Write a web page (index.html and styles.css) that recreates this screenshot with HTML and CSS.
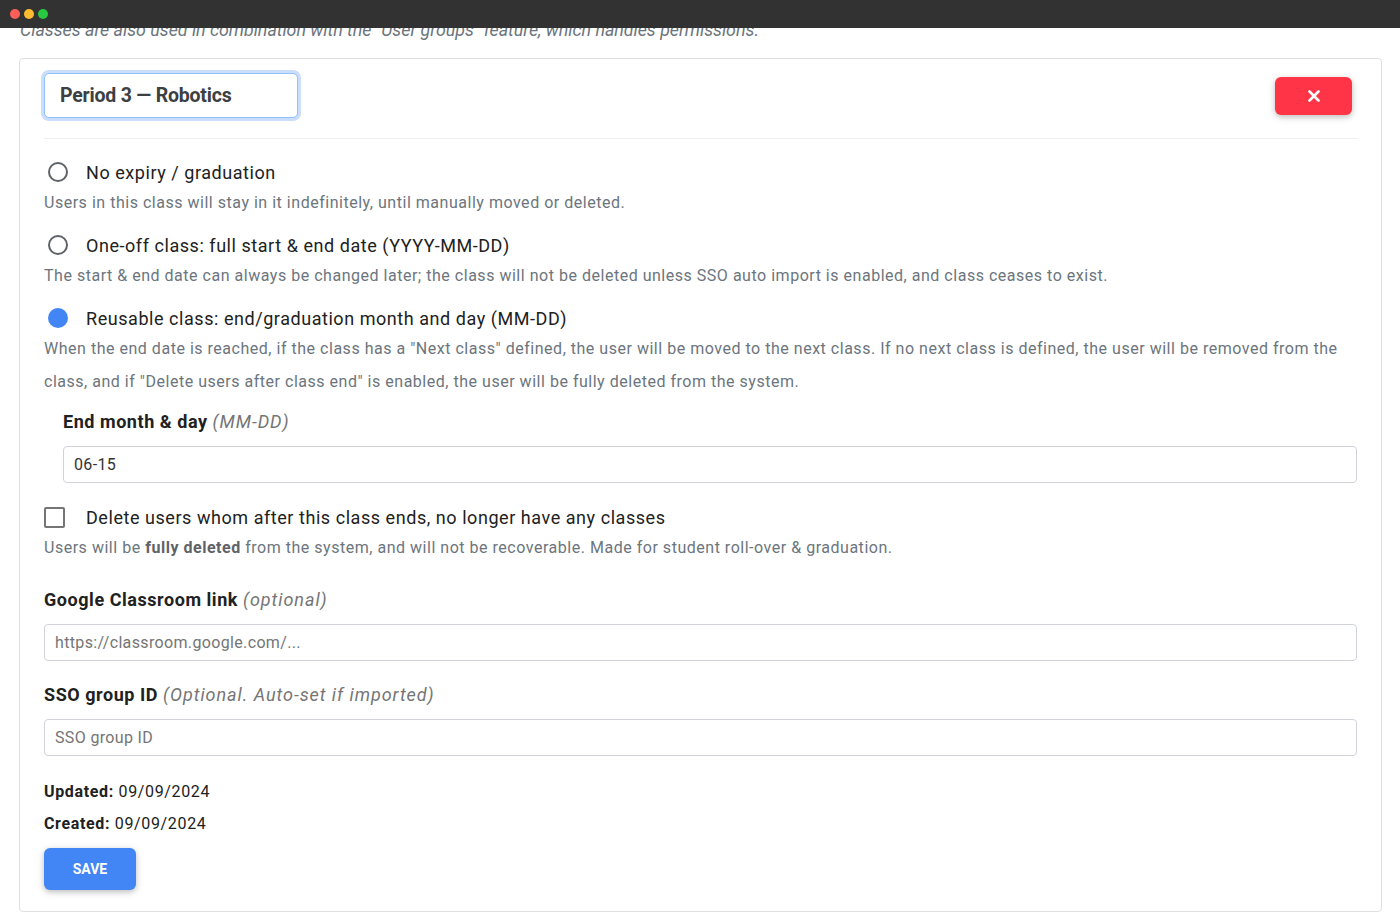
FILE: index.html
```html
<!DOCTYPE html>
<html lang="en">
<head>
<meta charset="utf-8">
<title>Class editor</title>
<link rel="stylesheet" href="styles.css">
</head>
<body>
<div class="topbar">
  <span class="dot dot-red"></span>
  <span class="dot dot-yellow"></span>
  <span class="dot dot-green"></span>
</div>
<div class="viewport">
  <div class="page">
    <p class="intro">Classes are also used in combination with the "User groups" feature, which handles permissions.</p>
    <div class="card">
      <div class="card-header">
        <input class="title-input" type="text" value="Period 3 — Robotics">
        <button class="close-btn" type="button" aria-label="Close">
          <svg width="12" height="12" viewBox="0 0 12 12"><path d="M1.5 1.5 L10.5 10.5 M10.5 1.5 L1.5 10.5" stroke="#fff" stroke-width="2.6" stroke-linecap="round"/></svg>
        </button>
      </div>

      <div class="options">
        <div class="option">
          <div class="option-row"><span class="radio"></span><span>No expiry / graduation</span></div>
          <p class="desc">Users in this class will stay in it indefinitely, until manually moved or deleted.</p>
        </div>
        <div class="option">
          <div class="option-row"><span class="radio"></span><span>One-off class: full start &amp; end date (YYYY-MM-DD)</span></div>
          <p class="desc">The start &amp; end date can always be changed later; the class will not be deleted unless SSO auto import is enabled, and class ceases to exist.</p>
        </div>
        <div class="option">
          <div class="option-row"><span class="radio radio-checked"></span><span>Reusable class: end/graduation month and day (MM-DD)</span></div>
          <p class="desc">When the end date is reached, if the class has a "Next class" defined, the user will be moved to the next class. If no next class is defined, the user will be removed from the class, and if "Delete users after class end" is enabled, the user will be fully deleted from the system.</p>
        </div>
      </div>

      <div class="subfield">
        <div class="field-label">End month &amp; day <em>(MM-DD)</em></div>
        <input class="text-input" type="text" value="06-15">
      </div>

      <div class="check-block">
        <div class="option-row"><span class="checkbox"></span><span>Delete users whom after this class ends, no longer have any classes</span></div>
        <p class="desc">Users will be <strong>fully deleted</strong> from the system, and will not be recoverable. Made for student roll-over &amp; graduation.</p>
      </div>

      <div class="field field-google">
        <div class="field-label">Google Classroom link <em>(optional)</em></div>
        <input class="text-input" type="text" placeholder="https://classroom.google.com/...">
      </div>

      <div class="field field-sso">
        <div class="field-label">SSO group ID <em>(Optional. Auto-set if imported)</em></div>
        <input class="text-input" type="text" placeholder="SSO group ID">
      </div>

      <div class="meta">
        <div><strong>Updated:</strong> 09/09/2024</div>
        <div><strong>Created:</strong> 09/09/2024</div>
      </div>

      <button class="save-btn" type="button">Save</button>
    </div>
  </div>
</div>
</body>
</html>
```

FILE: styles.css
```css
* { box-sizing: border-box; }

html, body {
  margin: 0;
  padding: 0;
  background: #fff;
  font-family: Roboto, "Liberation Sans", Arial, sans-serif;
  color: #212121;
}

.topbar {
  height: 28px;
  background: #323232;
  display: flex;
  align-items: center;
  padding-left: 10px;
  gap: 4px;
  position: relative;
  z-index: 2;
}

.dot {
  width: 10px;
  height: 10px;
  border-radius: 50%;
  display: inline-block;
}
.dot-red { background: #ff5f57; }
.dot-yellow { background: #febc2e; }
.dot-green { background: #28c840; }

.viewport {
  height: 885px;
  overflow: hidden;
}

.page {
  margin-top: -9px;
  padding: 0 18px 0 19px;
}

.intro {
  margin: 0 0 18px 1px;
  font-size: 17.8px;
  line-height: 21px;
  font-style: italic;
  color: #6c757d;
}

.card {
  border: 1px solid #e0e0e0;
  border-radius: 4px;
  padding: 14px 24px 21px 24px;
  letter-spacing: 0.5px;
}

.card-header {
  display: flex;
  justify-content: space-between;
  align-items: center;
  padding-bottom: 20px;
  border-bottom: 1px solid #eeeeee;
  margin-bottom: 19px;
}

.title-input {
  width: 254px;
  height: 45px;
  border: 1px solid #90c2fb;
  border-radius: 5px;
  box-shadow: 0 0 0 3px rgba(66, 133, 244, 0.28);
  padding: 0 0 0 15px;
  font-family: inherit;
  font-size: 19.5px;
  font-weight: 700;
  letter-spacing: -0.2px;
  color: #3c4043;
  outline: none;
}

.close-btn {
  width: 77px;
  height: 38px;
  margin-right: 5px;
  border: none;
  border-radius: 6px;
  background: #ff3547;
  display: flex;
  align-items: center;
  justify-content: center;
  box-shadow: 0 2px 5px 0 rgba(0,0,0,0.16), 0 2px 10px 0 rgba(0,0,0,0.12);
  padding: 0;
}

.options {
  display: flex;
  flex-direction: column;
  gap: 12px;
}

.option-row {
  display: flex;
  align-items: center;
  height: 28px;
  font-size: 18px;
  color: #212121;
  letter-spacing: 0.55px;
}

.radio {
  width: 20px;
  height: 20px;
  border-radius: 50%;
  border: 2px solid #5f6368;
  margin-left: 4px;
  margin-right: 18px;
  flex: none;
}
.radio-checked {
  border: none;
  background: #4285f4;
}

.checkbox {
  width: 21px;
  height: 21px;
  border: 2px solid #757575;
  border-radius: 2px;
  margin-right: 21px;
  flex: none;
}

.desc {
  margin: 0;
  font-size: 16px;
  line-height: 33px;
  color: #6c757d;
  letter-spacing: 0.52px;
}
.desc strong {
  font-weight: 700;
  color: #5f6368;
}

.subfield {
  margin: 10px 0 0 19px;
}

.field-label {
  font-size: 18px;
  line-height: 28px;
  font-weight: 700;
  color: #212121;
  margin-bottom: 10px;
  letter-spacing: 0.55px;
}
.field-label em {
  font-weight: 400;
  color: #757575;
  letter-spacing: 0.95px;
}

.text-input {
  display: block;
  width: 100%;
  height: 37px;
  border: 1px solid #d0d4d9;
  border-radius: 4px;
  padding: 0 10px;
  font-family: inherit;
  font-size: 16px;
  letter-spacing: 0.35px;
  color: #333;
  outline: none;
}
.text-input::placeholder { color: #757575; }

.check-block { margin-top: 20px; }

.field-google { margin-top: 22px; }
.field-sso { margin-top: 20px; }

.meta {
  margin-top: 20px;
  font-size: 16px;
  line-height: 32px;
  color: #212121;
  letter-spacing: 0.65px;
}

.save-btn {
  margin-top: 8px;
  width: 92px;
  height: 42px;
  border: none;
  border-radius: 6px;
  background: #4285f4;
  color: #fff;
  font-family: inherit;
  font-size: 14px;
  font-weight: 700;
  letter-spacing: 0;
  text-transform: uppercase;
  box-shadow: 0 2px 5px 0 rgba(0,0,0,0.16), 0 2px 10px 0 rgba(0,0,0,0.12);
  padding: 0;
}
```
